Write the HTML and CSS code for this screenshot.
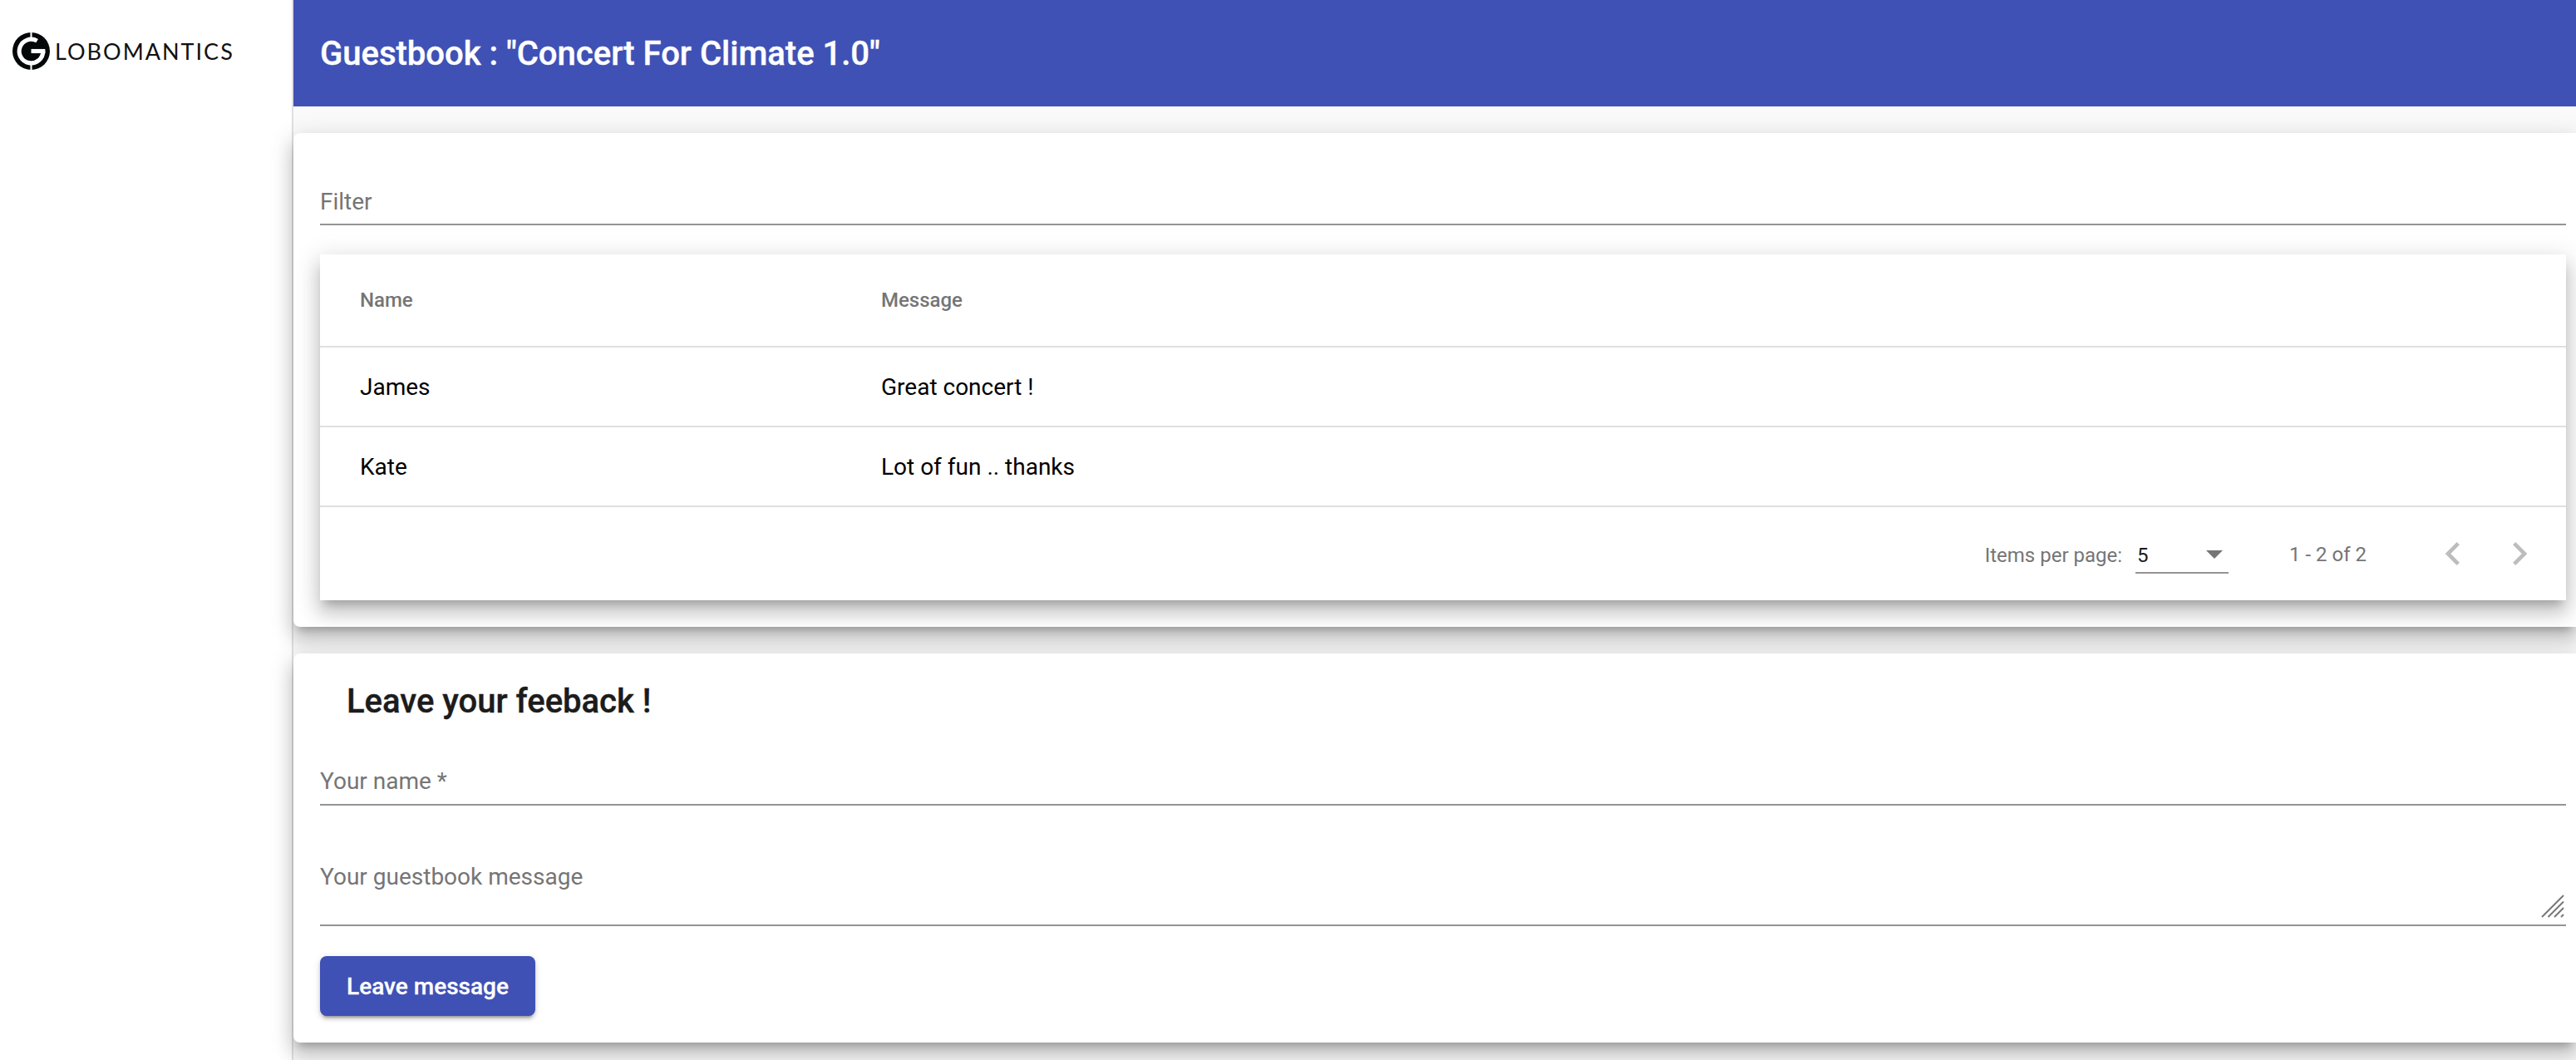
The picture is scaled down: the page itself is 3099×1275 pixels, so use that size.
FILE: index.html
```html
<!DOCTYPE html>
<html lang="en">
<head>
  <meta charset="UTF-8" />
  <title>Guestbook</title>
  <link rel="stylesheet" href="styles.css">
</head>
<body>
  <aside class="sidebar">
    <div class="logo">
      <svg class="logo-mark" viewBox="0 0 44 44" width="45" height="45">
        <circle cx="22" cy="22" r="22" fill="#050808"/>
        <path d="M29 9.9A14 14 0 1 0 36 22" fill="none" stroke="#fff" stroke-width="5"/>
        <path d="M22 19.5h16.5v5H22z" fill="#fff"/>
        <path d="M21 0h2v8h-2zM21 36h2v8h-2z" fill="#fff"/>
      </svg>
      <span class="logo-text">LOBOMANTICS</span>
    </div>
  </aside>
  <div class="content">
    <header class="toolbar">Guestbook : "Concert For Climate 1.0"</header>
    <main>
      <section class="card list-card">
        <div class="field filter-field"><span class="placeholder">Filter</span></div>
        <div class="table-card">
          <div class="row head-row">
            <div class="col-name">Name</div>
            <div class="col-msg">Message</div>
          </div>
          <div class="row">
            <div class="col-name">James</div>
            <div class="col-msg">Great concert !</div>
          </div>
          <div class="row">
            <div class="col-name">Kate</div>
            <div class="col-msg">Lot of fun .. thanks</div>
          </div>
          <div class="paginator">
            <span class="per-page">Items per page:</span>
            <div class="page-select">
              <span>5</span>
              <i class="select-arrow"></i>
            </div>
            <span class="range">1 - 2 of 2</span>
            <button class="page-btn">
              <svg viewBox="0 0 24 24" width="56" height="56"><path d="M15.41 7.41L14 6l-6 6 6 6 1.41-1.41L10.83 12z"/></svg>
            </button>
            <button class="page-btn">
              <svg viewBox="0 0 24 24" width="56" height="56"><path d="M10 6L8.59 7.41 13.17 12l-4.58 4.59L10 18l6-6z"/></svg>
            </button>
          </div>
        </div>
      </section>
      <section class="card form-card">
        <h2>Leave your feeback !</h2>
        <div class="field name-field"><span class="placeholder">Your name *</span></div>
        <div class="field message-field">
          <span class="placeholder">Your guestbook message</span>
          <svg class="resize-grip" viewBox="0 0 28 28" width="28" height="28">
            <path d="M1 27L27 1M8.5 27L27 8.5M16 27L27 16M24 27l3-3" stroke="#777" stroke-width="2" fill="none"/>
          </svg>
        </div>
        <button class="submit">Leave message</button>
      </section>
    </main>
  </div>
</body>
</html>
```

FILE: styles.css
```css
* {
  box-sizing: border-box;
}
html, body {
  height: 100%;
}
body {
  margin: 0;
  display: flex;
  height: 1275px;
  overflow: hidden;
  font-family: Roboto, "Liberation Sans", sans-serif;
  background: #fff;
}
.sidebar {
  width: 353px;
  flex: none;
  border-right: 2px solid #e0e0e0;
  background: #fff;
}
.logo {
  display: flex;
  align-items: center;
  gap: 6px;
  padding: 38px 0 0 15px;
}
.logo-text {
  padding-top: 2px;
  font-family: Lato, sans-serif;
  font-size: 27px;
  line-height: 44px;
  letter-spacing: 2px;
  color: #111;
}
.content {
  flex: 1;
  min-width: 0;
  background: #fafafa;
}
.toolbar {
  height: 128px;
  padding: 0 32px;
  display: flex;
  align-items: center;
  background: #3f51b5;
  color: #fff;
  font-size: 40px;
  font-weight: 500;
  -webkit-text-stroke: 0.4px #fff;
}
main {
  padding-top: 32px;
}
.card {
  position: relative;
  background: #fff;
  border-radius: 8px 0 0 8px;
  box-shadow: 0 10px 10px -6px rgba(0,0,0,.2), 0 16px 20px 2px rgba(0,0,0,.14), 0 6px 28px 4px rgba(0,0,0,.12);
  padding: 0 12px 0 32px;
}
.list-card {
  height: 594px;
  padding-top: 62px;
}
.form-card {
  height: 468px;
  margin-top: 32px;
  padding-top: 30px;
}
.field {
  position: relative;
  border-bottom: 2px solid #949494;
}
.placeholder {
  font-size: 28px;
  line-height: 36px;
  color: #757575;
}
.filter-field {
  height: 49px;
  padding-top: 3px;
}
.table-card {
  margin-top: 35px;
  height: 416px;
  background: #fff;
  box-shadow: 0 10px 10px -6px rgba(0,0,0,.2), 0 16px 20px 2px rgba(0,0,0,.14), 0 6px 28px 4px rgba(0,0,0,.12);
}
.row {
  display: flex;
  align-items: center;
  height: 96px;
  padding-left: 48px;
  border-bottom: 2px solid #e0e0e0;
  font-size: 28px;
  color: #000;
}
.head-row {
  height: 112px;
  font-size: 24px;
  font-weight: 500;
  color: #757575;
}
.col-name {
  width: 627px;
}
.paginator {
  height: 112px;
  display: flex;
  align-items: center;
  justify-content: flex-end;
  padding-right: 16px;
  font-size: 24px;
  color: #757575;
}
.per-page {
  margin: 4px 16px 0 0;
}
.page-select {
  position: relative;
  width: 112px;
  height: 48px;
  padding: 12px 2px 0;
  border-bottom: 2px solid #949494;
  color: #1a1a1a;
  line-height: 28px;
}
.select-arrow {
  position: absolute;
  right: 7px;
  top: 20px;
  border-left: 10px solid transparent;
  border-right: 10px solid transparent;
  border-top: 10px solid #757575;
}
.range {
  margin: 2px 64px 0 73px;
}
.page-btn {
  width: 80px;
  height: 80px;
  padding: 12px;
  border: 0;
  background: none;
  fill: rgba(0,0,0,.26);
}
.page-btn svg {
  display: block;
}
h2 {
  margin: 0 0 0 32px;
  font-size: 40px;
  line-height: 56px;
  font-weight: 500;
  color: #1c1c1c;
  -webkit-text-stroke: 0.4px #1c1c1c;
}
.name-field {
  height: 47px;
  margin-top: 50px;
}
.message-field {
  height: 77px;
  margin-top: 68px;
}
.resize-grip {
  position: absolute;
  right: 2px;
  bottom: 8px;
}
.submit {
  display: block;
  width: 259px;
  height: 72px;
  margin-top: 36px;
  border: 0;
  border-radius: 8px;
  background: #3f51b5;
  color: #fff;
  font-family: inherit;
  font-size: 28px;
  font-weight: 500;
  -webkit-text-stroke: 0.3px #fff;
  box-shadow: 0 6px 2px -4px rgba(0,0,0,.2), 0 4px 4px 0 rgba(0,0,0,.14), 0 2px 10px 0 rgba(0,0,0,.12);
}
```
